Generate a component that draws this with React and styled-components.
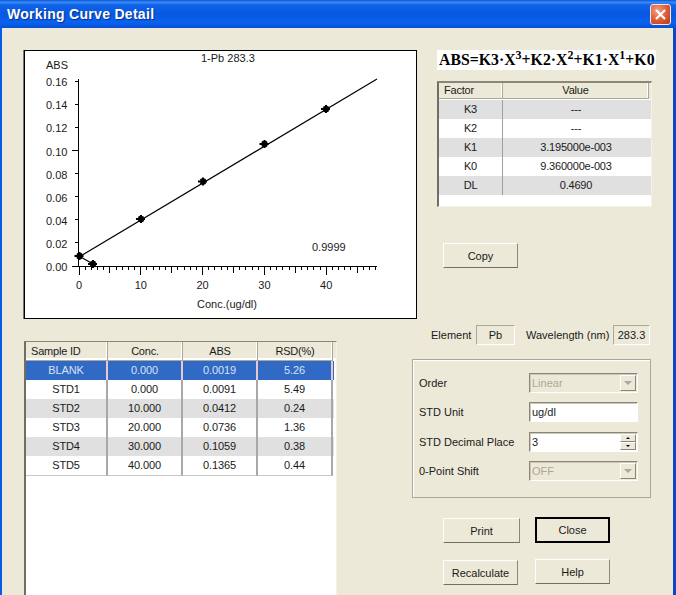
import { createGlobalStyle, styled } from "styled-components"

const GlobalStyle = createGlobalStyle`
	html, body {
		margin: 0;
		padding: 0;
		background: #ece9d8;
	}
	* {
		box-sizing: border-box;
	}
`

const Dialog = styled.div`
	width: 676px;
	height: 595px;
	overflow: hidden;
	display: flex;
	flex-direction: column;
	font-family: "Liberation Sans", Arial, sans-serif;
	font-size: 11px;
	color: #1a1a1a;
`

const TitleBar = styled.header`
	height: 28px;
	flex: none;
	display: flex;
	align-items: center;
	justify-content: space-between;
	padding: 0 5px 0 7px;
	background: linear-gradient(180deg, #0a54d8 0%, #3a8cf5 8%, #0f63e8 18%, #0658e2 50%, #0a62ee 80%, #0650d4 100%);
`

const Title = styled.h1`
	margin: 0;
	font-size: 14px;
	font-weight: bold;
	letter-spacing: 0.3px;
	color: #fff;
	text-shadow: 1px 1px 1px #0a2f90;
`

const CloseBox = styled.div`
	width: 21px;
	height: 21px;
	display: flex;
	align-items: center;
	justify-content: center;
	border: 1px solid #f0e8e0;
	border-radius: 3px;
	background: radial-gradient(circle at 35% 30%, #f0a080, #d9532f 60%, #b83a18);
`

const Body = styled.main`
	flex: 1;
	min-height: 0;
	display: flex;
	flex-direction: column;
	background: #ece9d8;
	border-left: 2px solid #0a5be8;
	border-right: 3px solid #0a48c8;
	padding: 22px 0 0 22px;
`

const TopRow = styled.section`
	display: flex;
	height: 269px;
	flex: none;
`

const ChartBox = styled.div`
	width: 393px;
	height: 269px;
	flex: none;
	background: #fff;
	border: 1px solid #000;
	box-shadow: -1px 0 0 #777;

	svg {
		display: block;
		width: 391px;
		height: 267px;
	}
	text {
		font-family: "Liberation Sans", Arial, sans-serif;
		font-size: 11px;
		fill: #1a1a1a;
	}
`

const SideTop = styled.div`
	margin-left: 20px;
	display: flex;
	flex-direction: column;
`

const Formula = styled.div`
	width: 219px;
	height: 20px;
	background: #fff;
	padding-left: 2px;
	font-family: "Liberation Serif", "Times New Roman", serif;
	font-size: 15.8px;
	font-weight: bold;
	line-height: 20px;
	color: #000;
	white-space: nowrap;

	sup {
		font-size: 12px;
		line-height: 0;
		vertical-align: 6px;
	}
`

const FactorPanel = styled.div`
	margin-top: 11px;
	width: 215px;
	height: 126px;
	background: #fff;
	border-top: 2px solid #8a8778;
	border-left: 2px solid #716f64;
	border-right: 1px solid #f4f2e8;
	border-bottom: 1px solid #f4f2e8;
`

const FactorRow = styled.div`
	display: grid;
	grid-template-columns: 64px 146px;
	height: ${(p) => (p.$head ? "16px" : "19px")};
	margin-bottom: ${(p) => (p.$head ? "1px" : "0")};
	line-height: ${(p) => (p.$head ? "15px" : "18px")};
	background: ${(p) => (p.$head ? "#ece9d8" : p.$shade ? "#e0e0e0" : "#fff")};
	letter-spacing: -0.2px;
`

const FactorCell = styled.div`
	text-align: ${(p) => (p.$left ? "left" : "center")};
	padding-left: ${(p) => (p.$left ? "5px" : "0")};
	border-right: ${(p) => (p.$last ? "none" : "1px solid #a0a0a0")};
`

const HeadCell = styled(FactorCell)`
	border-right: 1px solid #aca899;
	border-bottom: 1px solid #aca899;
	box-shadow: inset -1px 0 0 #fff;
`

const Button = styled.button`
	width: ${(p) => (p.$wide ? "77px" : "75px")};
	height: ${(p) => (p.$focused ? "26px" : "25px")};
	padding: 0;
	font-family: inherit;
	font-size: 11px;
	color: #1a1a1a;
	background: #ece9d8;
	border: 1px solid;
	border-color: #fff #8a8778 #716f64 #fff;
	outline: ${(p) => (p.$focused ? "2px solid #000" : "none")};
	outline-offset: -2px;
`

const CopyButton = styled(Button)`
	margin: 36px 0 0 6px;
`

const BottomRow = styled.section`
	flex: 1;
	min-height: 0;
	display: flex;
`

const SampleTable = styled.div`
	width: 313px;
	margin-top: 22px;
	background: #fff;
	border-top: 1px solid #8a8778;
	border-left: 2px solid #716f64;
	border-right: 1px solid #f4f2e8;
`

const SampleHeader = styled.div`
	display: grid;
	grid-template-columns: 82px 75px 75px 75px;
	height: 16px;
	margin-bottom: 3px;
	line-height: 18px;
	background: #ece9d8;
	letter-spacing: -0.2px;
`

const SampleRow = styled.div`
	display: grid;
	width: 308px;
	grid-template-columns: 82px 75px 75px 75px 1px;
	height: 19px;
	line-height: 19px;
	background: ${(p) => (p.$selected ? "#316ac5" : p.$shade ? "#e0e0e0" : "#fff")};
	color: ${(p) => (p.$selected ? "#d8e2f6" : "#1a1a1a")};
	letter-spacing: -0.1px;
`

const SampleCell = styled.div`
	text-align: center;
	border-right: 2px solid ${(p) => (p.$selected ? "#e8c8d0" : "#a8a8a8")};
	border-bottom: ${(p) => (p.$lastRow ? "1px solid #c8c8c8" : "none")};
`

const SampleHead = styled.div`
	text-align: ${(p) => (p.$left ? "left" : "center")};
	padding-left: ${(p) => (p.$left ? "5px" : "0")};
	border-right: 1px solid #aca899;
	border-bottom: 1px solid #aca899;
	box-shadow: inset -1px 0 0 #fff;
`

const SideBottom = styled.div`
	margin: 6px 0 0 75px;
	display: flex;
	flex-direction: column;
`

const InfoRow = styled.div`
	display: flex;
	align-items: center;
	height: 20px;
	padding-left: 19px;
`

const InfoLabel = styled.span`
	width: ${(p) => p.$width}px;
	margin-left: ${(p) => p.$before}px;
`

const InfoBox = styled.div`
	width: ${(p) => p.$width}px;
	height: 20px;
	line-height: 18px;
	text-align: center;
	border: 1px solid;
	border-color: #aca899 #fff #fff #aca899;
`

const GroupBox = styled.fieldset`
	margin: 14px 0 0;
	padding: 14px 12px 0 6px;
	width: 238px;
	height: 139px;
	border: 1px solid #aca899;
	box-shadow: inset 1px 1px 0 #fff;
	display: grid;
	grid-template-columns: 110px 109px;
	grid-auto-rows: 29.3px;
	align-items: start;
`

const FieldLabel = styled.label`
	line-height: 18px;
`

const Field = styled.div`
	height: 20px;
	margin-top: -1px;
	display: flex;
	align-items: stretch;
	justify-content: space-between;
	padding-left: 2px;
	line-height: 18px;
	background: ${(p) => (p.$disabled ? "#ece9d8" : "#fff")};
	color: ${(p) => (p.$disabled ? "#aca899" : "#1a1a1a")};
	border: 1px solid;
	border-color: #8a8778 #fff #fff #8a8778;
	box-shadow: inset 1px 1px 0 #ccc8b8;
`

const ArrowBox = styled.div`
	width: 16px;
	margin: 1px;
	display: flex;
	align-items: center;
	justify-content: center;
	background: #ece9d8;
	border: 1px solid;
	border-color: #fff #8a8778 #8a8778 #fff;
`

const Triangle = styled.span`
	width: 0;
	height: 0;
	border-left: ${(p) => p.$size}px solid transparent;
	border-right: ${(p) => p.$size}px solid transparent;
	${(p) => (p.$up ? "border-bottom" : "border-top")}: ${(p) => p.$size}px solid ${(p) => p.$color};
`

const Spinner = styled.div`
	width: 16px;
	margin: 1px;
	display: grid;
	grid-template-rows: 1fr 1fr;
`

const SpinPart = styled(ArrowBox)`
	width: 16px;
	margin: 0;
`

const ButtonColumns = styled.div`
	margin: 19px 0 0 31px;
	display: flex;
	gap: 15px;
`

const ButtonColumn = styled.div`
	display: flex;
	flex-direction: column;
	gap: ${(p) => (p.$lower ? "17px" : "16px")};
	padding-top: ${(p) => (p.$lower ? "1px" : "0")};
`

const factors = [
	["K3", "---"],
	["K2", "---"],
	["K1", "3.195000e-003"],
	["K0", "9.360000e-003"],
	["DL", "0.4690"],
]

const samples = [
	["BLANK", "0.000", "0.0019", "5.26"],
	["STD1", "0.000", "0.0091", "5.49"],
	["STD2", "10.000", "0.0412", "0.24"],
	["STD3", "20.000", "0.0736", "1.36"],
	["STD4", "30.000", "0.1059", "0.38"],
	["STD5", "40.000", "0.1365", "0.44"],
]

const yTicks = ["0.00", "0.02", "0.04", "0.06", "0.08", "0.10", "0.12", "0.14", "0.16"]
const xToPx = (v) => 79 + v * 6.18
const yToPx = (i) => 266 - i * 23.1
const points = [
	[79.5, 256],
	[141, 219],
	[203, 181.5],
	[264.5, 144],
	[326, 109],
	[93, 264],
]

function Curve() {
	const minor = []
	for (let v = 0; v <= 48; v++) {
		const len = v % 10 === 0 ? 9 : v % 5 === 0 ? 7 : 4
		minor.push(<line key={v} x1={xToPx(v)} x2={xToPx(v)} y1={266} y2={266 + len} />)
	}

	return (
		<svg viewBox="25 51 391 267">
			<text x="201" y="62">1-Pb 283.3</text>
			<text x="46" y="69">ABS</text>
			<text x="312" y="251">0.9999</text>
			<text x="197" y="308">Conc.(ug/dl)</text>
			<g stroke="#000" strokeWidth="1" shapeRendering="crispEdges">
				<line x1="78" x2="78" y1="79" y2="266" />
				<line x1="72" x2="377" y1="266" y2="266" />
				{minor}
				{yTicks.map((t, i) => (
					<line key={t} x1={t === "0.10" || t === "0.00" ? 72 : 75} x2="78" y1={yToPx(i)} y2={yToPx(i)} />
				))}
			</g>
			{yTicks.map((t, i) => (
				<text key={t} x="46" y={yToPx(i) + 5}>{t}</text>
			))}
			{[0, 10, 20, 30, 40].map((v) => (
				<text key={v} x={xToPx(v)} y="289" textAnchor="middle">{v}</text>
			))}
			<line x1="79" y1="257" x2="377" y2="79" stroke="#000" strokeWidth="1.2" />
			<line x1="79" y1="256" x2="93" y2="264" stroke="#000" strokeWidth="1.2" />
			{points.map(([x, y]) => (
				<path key={x} d={`M${x - 5} ${y}H${x + 4}M${x} ${y - 4}V${y + 4}M${x - 2.5} ${y - 2.5}L${x + 2.5} ${y + 2.5}M${x - 2.5} ${y + 2.5}L${x + 2.5} ${y - 2.5}`} stroke="#000" strokeWidth="2" fill="none" />
			))}
		</svg>
	)
}

export default function App() {
	return (
		<Dialog>
			<GlobalStyle />
			<TitleBar>
				<Title>Working Curve Detail</Title>
				<CloseBox>
					<svg width="13" height="13" viewBox="0 0 13 13">
						<path d="M2 2L11 11M11 2L2 11" stroke="#fff" strokeWidth="2.2" />
					</svg>
				</CloseBox>
			</TitleBar>
			<Body>
				<TopRow>
					<ChartBox>
						<Curve />
					</ChartBox>
					<SideTop>
						<Formula>
							ABS=K3·X<sup>3</sup>+K2·X<sup>2</sup>+K1·X<sup>1</sup>+K0
						</Formula>
						<FactorPanel>
							<FactorRow $head>
								<HeadCell $left>Factor</HeadCell>
								<HeadCell>Value</HeadCell>
							</FactorRow>
							{factors.map(([name, value], i) => (
								<FactorRow key={name} $shade={i % 2 === 0}>
									<FactorCell>{name}</FactorCell>
									<FactorCell $last>{value}</FactorCell>
								</FactorRow>
							))}
						</FactorPanel>
						<CopyButton>Copy</CopyButton>
					</SideTop>
				</TopRow>
				<BottomRow>
					<SampleTable>
						<SampleHeader>
							<SampleHead $left>Sample ID</SampleHead>
							<SampleHead>Conc.</SampleHead>
							<SampleHead>ABS</SampleHead>
							<SampleHead>RSD(%)</SampleHead>
						</SampleHeader>
						{samples.map((row, i) => (
							<SampleRow key={row[0]} $selected={i === 0} $shade={i % 2 === 0}>
								{row.map((cell, j) => (
									<SampleCell key={j} $selected={i === 0} $lastRow={i === samples.length - 1}>{cell}</SampleCell>
								))}
							</SampleRow>
						))}
					</SampleTable>
					<SideBottom>
						<InfoRow>
							<InfoLabel $width={45} $before={0}>Element</InfoLabel>
							<InfoBox $width={39}>Pb</InfoBox>
							<InfoLabel $width={87} $before={11}>Wavelength (nm)</InfoLabel>
							<InfoBox $width={37}>283.3</InfoBox>
						</InfoRow>
						<GroupBox>
							<FieldLabel>Order</FieldLabel>
							<Field $disabled>
								Linear
								<ArrowBox><Triangle $size={4} $color="#aca899" /></ArrowBox>
							</Field>
							<FieldLabel>STD Unit</FieldLabel>
							<Field>ug/dl</Field>
							<FieldLabel>STD Decimal Place</FieldLabel>
							<Field>
								3
								<Spinner>
									<SpinPart><Triangle $up $size={2} $color="#000" /></SpinPart>
									<SpinPart><Triangle $size={2} $color="#000" /></SpinPart>
								</Spinner>
							</Field>
							<FieldLabel>0-Point Shift</FieldLabel>
							<Field $disabled>
								OFF
								<ArrowBox><Triangle $size={4} $color="#aca899" /></ArrowBox>
							</Field>
						</GroupBox>
						<ButtonColumns>
							<ButtonColumn $lower>
								<Button $wide>Print</Button>
								<Button>Recalculate</Button>
							</ButtonColumn>
							<ButtonColumn>
								<Button $focused>Close</Button>
								<Button>Help</Button>
							</ButtonColumn>
						</ButtonColumns>
					</SideBottom>
				</BottomRow>
			</Body>
		</Dialog>
	)
}
